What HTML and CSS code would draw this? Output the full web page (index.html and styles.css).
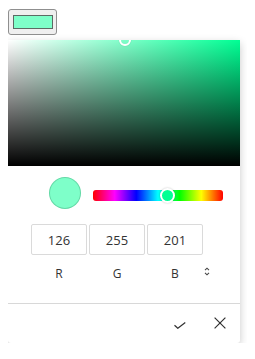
FILE: index.html
```html
<!DOCTYPE html>
<html lang="en">
<head>
    <meta charset="UTF-8">
    <meta name="viewport" content="width=device-width, initial-scale=1.0">
    <title>Color Picker</title>
    <link rel="stylesheet" href="styles.css">
</head>
<body>
    <button class="swatch-button"><span class="swatch"></span></button>

    <div class="picker">
        <div class="sv-area">
            <span class="sv-thumb"></span>
        </div>

        <div class="hue-row">
            <span class="preview"></span>
            <div class="hue-track">
                <span class="hue-thumb"></span>
            </div>
        </div>

        <div class="fields">
            <input class="field-input" type="text" value="126">
            <input class="field-input" type="text" value="255">
            <input class="field-input" type="text" value="201">
            <span class="field-spacer"></span>
            <span class="field-label">R</span>
            <span class="field-label">G</span>
            <span class="field-label">B</span>
            <button class="mode-toggle">
                <svg width="6" height="9" viewBox="0 0 6 9">
                    <path d="M1 3.2 L3 1.2 L5 3.2 M1 5.8 L3 7.8 L5 5.8" fill="none" stroke="#444" stroke-width="1.1"/>
                </svg>
            </button>
        </div>

        <div class="actions">
            <button class="action-button">
                <svg width="12" height="12" viewBox="0 0 12 12">
                    <path d="M0.5 8.2 L3.8 11.3 L11.3 5.6" fill="none" stroke="#333" stroke-width="1.2"/>
                </svg>
            </button>
            <button class="action-button">
                <svg width="12" height="12" viewBox="0 0 12 12">
                    <path d="M0.6 0.6 L11.4 11.4 M11.4 0.6 L0.6 11.4" fill="none" stroke="#333" stroke-width="1.2"/>
                </svg>
            </button>
        </div>
    </div>
</body>
</html>
```

FILE: styles.css
```css
* {
    margin: 0;
    padding: 0;
    box-sizing: border-box;
}

body {
    margin: 8px;
    font-family: 'Open Sans', 'Noto Sans', sans-serif;
    background-color: #fff;
    color: #333;
}

.swatch-button {
    display: flex;
    align-items: center;
    justify-content: center;
    width: 49px;
    height: 26px;
    margin-top: 1px;
    background-color: #efefef;
    border: 1px solid #8f8f8f;
    border-radius: 3px;
    cursor: pointer;
}

.swatch {
    display: block;
    width: 40px;
    height: 14px;
    background-color: #7effc9;
    border: 1px solid #5c6a64;
}

.picker {
    width: 232px;
    margin-top: 5px;
    background-color: #fff;
    border-radius: 0 0 3px 3px;
    box-shadow: 0 3px 8px rgba(0, 0, 0, 0.22);
    overflow: hidden;
}

.sv-area {
    position: relative;
    height: 126px;
    background:
        linear-gradient(to top, #000, rgba(0, 0, 0, 0)),
        linear-gradient(to right, #fff, #00ff94);
}

.sv-thumb {
    position: absolute;
    left: 111px;
    top: -6px;
    width: 12px;
    height: 12px;
    border: 2px solid #fff;
    border-radius: 50%;
    box-shadow: 0 0 1px rgba(0, 0, 0, 0.3);
}

.hue-row {
    display: flex;
    align-items: flex-start;
    gap: 12px;
    padding: 11px 17px 0 41px;
}

.preview {
    display: block;
    width: 32px;
    height: 32px;
    border-radius: 50%;
    background-color: #7effc9;
    border: 1px solid rgba(0, 80, 40, 0.22);
}

.hue-track {
    position: relative;
    width: 130px;
    height: 11px;
    margin-top: 13px;
    border-radius: 3px;
    background: linear-gradient(to right, #f00, #f0f, #00f, #0ff, #0f0, #ff0, #f00);
}

.hue-thumb {
    position: absolute;
    left: 67px;
    top: -2px;
    width: 15px;
    height: 15px;
    border-radius: 50%;
    border: 2px solid #fff;
    background-color: #00ff94;
    box-shadow: 0 0 2px rgba(0, 0, 0, 0.25);
}

.fields {
    display: grid;
    grid-template-columns: 56px 56px 56px 6px;
    grid-template-rows: 31px 16px;
    column-gap: 2px;
    row-gap: 11px;
    padding: 15px 0 21px 23px;
}

.field-input {
    width: 100%;
    height: 100%;
    border: 1px solid #dadada;
    border-radius: 2px;
    font-family: inherit;
    font-size: 13px;
    color: #333;
    text-align: center;
    outline: none;
}

.field-label {
    font-size: 12px;
    line-height: 16px;
    text-align: center;
    color: #333;
}

.mode-toggle {
    display: flex;
    justify-content: center;
    margin: 1px 0 0 -2px;
    height: 9px;
    border: none;
    background: none;
    cursor: pointer;
}

.actions {
    display: flex;
    justify-content: flex-end;
    gap: 28px;
    padding: 13px 14px 14px 0;
    border-top: 1px solid #d8d8d8;
}

.action-button {
    display: flex;
    width: 12px;
    height: 12px;
    border: none;
    background: none;
    cursor: pointer;
}
```
